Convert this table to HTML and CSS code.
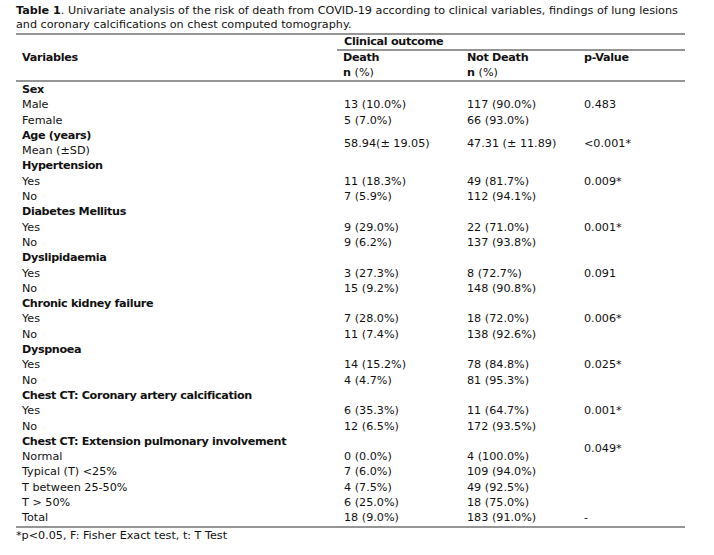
FILE: index.html
```html
<!DOCTYPE html>
<html lang="en">
<head>
<meta charset="utf-8">
<title>Table 1</title>
<link rel="stylesheet" href="styles.css">
</head>
<body>
<div class="wrap">
  <p class="caption"><strong class="tag">Table 1</strong>. Univariate analysis of the risk of death from COVID-19 according to clinical variables, findings of lung lesions and coronary calcifications on chest computed tomography.</p>
  <table class="tbl">
    <colgroup>
      <col class="c1"><col class="c2"><col class="c3"><col class="c4">
    </colgroup>
    <thead>
      <tr class="h1">
        <th rowspan="2" class="var">Variables</th>
        <th colspan="3" class="group">Clinical outcome</th>
      </tr>
      <tr class="h2">
        <th>Death<br><span class="np"><b>n</b> (%)</span></th>
        <th>Not Death<br><span class="np"><b>n</b> (%)</span></th>
        <th class="pv">p-Value</th>
      </tr>
    </thead>
    <tbody>
      <tr><td class="cat">Sex</td><td></td><td></td><td></td></tr>
      <tr><td>Male</td><td>13 (10.0%)</td><td>117 (90.0%)</td><td>0.483</td></tr>
      <tr><td>Female</td><td>5 (7.0%)</td><td>66 (93.0%)</td><td></td></tr>
      <tr><td class="cat">Age (years)</td><td rowspan="2" class="mid">58.94(± 19.05)</td><td rowspan="2" class="mid">47.31 (± 11.89)</td><td rowspan="2" class="mid">&lt;0.001*</td></tr>
      <tr><td>Mean (±SD)</td></tr>
      <tr><td class="cat">Hypertension</td><td></td><td></td><td></td></tr>
      <tr><td>Yes</td><td>11 (18.3%)</td><td>49 (81.7%)</td><td>0.009*</td></tr>
      <tr><td>No</td><td>7 (5.9%)</td><td>112 (94.1%)</td><td></td></tr>
      <tr><td class="cat">Diabetes Mellitus</td><td></td><td></td><td></td></tr>
      <tr><td>Yes</td><td>9 (29.0%)</td><td>22 (71.0%)</td><td>0.001*</td></tr>
      <tr><td>No</td><td>9 (6.2%)</td><td>137 (93.8%)</td><td></td></tr>
      <tr><td class="cat">Dyslipidaemia</td><td></td><td></td><td></td></tr>
      <tr><td>Yes</td><td>3 (27.3%)</td><td>8 (72.7%)</td><td>0.091</td></tr>
      <tr><td>No</td><td>15 (9.2%)</td><td>148 (90.8%)</td><td></td></tr>
      <tr><td class="cat">Chronic kidney failure</td><td></td><td></td><td></td></tr>
      <tr><td>Yes</td><td>7 (28.0%)</td><td>18 (72.0%)</td><td>0.006*</td></tr>
      <tr><td>No</td><td>11 (7.4%)</td><td>138 (92.6%)</td><td></td></tr>
      <tr><td class="cat">Dyspnoea</td><td></td><td></td><td></td></tr>
      <tr><td>Yes</td><td>14 (15.2%)</td><td>78 (84.8%)</td><td>0.025*</td></tr>
      <tr><td>No</td><td>4 (4.7%)</td><td>81 (95.3%)</td><td></td></tr>
      <tr><td class="cat">Chest CT: Coronary artery calcification</td><td></td><td></td><td></td></tr>
      <tr><td>Yes</td><td>6 (35.3%)</td><td>11 (64.7%)</td><td>0.001*</td></tr>
      <tr><td>No</td><td>12 (6.5%)</td><td>172 (93.5%)</td><td></td></tr>
      <tr><td class="cat">Chest CT: Extension pulmonary involvement</td><td></td><td></td><td rowspan="2" class="mid">0.049*</td></tr>
      <tr><td>Normal</td><td>0 (0.0%)</td><td>4 (100.0%)</td></tr>
      <tr><td>Typical (T) &lt;25%</td><td>7 (6.0%)</td><td>109 (94.0%)</td><td></td></tr>
      <tr><td>T between 25-50%</td><td>4 (7.5%)</td><td>49 (92.5%)</td><td></td></tr>
      <tr><td>T &gt; 50%</td><td>6 (25.0%)</td><td>18 (75.0%)</td><td></td></tr>
      <tr class="last"><td>Total</td><td>18 (9.0%)</td><td>183 (91.0%)</td><td>-</td></tr>
    </tbody>
  </table>
  <p class="foot">*p&lt;0.05, F: Fisher Exact test, t: T Test</p>
</div>
</body>
</html>
```
FILE: styles.css
```css
html, body {
  margin: 0;
  padding: 0;
  background: #ffffff;
}
body {
  font-family: "DejaVu Sans", "Liberation Sans", sans-serif;
  font-size: 11.2px;
  color: #111111;
}
.wrap {
  padding: 4px 0 0 16px;
  width: 675px;
}
.caption {
  margin: 0;
  line-height: 14px;
  padding-bottom: 1px;
  width: 675px;
}
.caption .tag {
  font-weight: 700;
}
.tbl {
  width: 669px;
  border-collapse: collapse;
  table-layout: fixed;
  border-top: 2px solid #959595;
}
.c1 { width: 321px; }
.c2 { width: 123px; }
.c3 { width: 117px; }
.c4 { width: 108px; }
.tbl th, .tbl td {
  padding: 0 0 0 6px;
  text-align: left;
  vertical-align: top;
  line-height: 15.3px;
  height: 15.3px;
  white-space: nowrap;
}
.tbl td:not(:first-child), .tbl th:not(:first-child) {
  padding-left: 7px;
}
.tbl th {
  font-weight: 700;
  letter-spacing: -0.3px;
}
.tbl .h1 th.group {
  border-bottom: 2px solid #959595;
  height: 14px;
  line-height: 14px;
}
.tbl .h2 th {
  line-height: 14.5px;
  height: 29px;
}
.tbl .var {
  vertical-align: middle;
}
.np {
  font-weight: 400;
  letter-spacing: 0;
}
.tbl thead {
  border-bottom: 2px solid #959595;
}
.tbl .cat {
  font-weight: 700;
  letter-spacing: -0.35px;
}
.tbl .mid {
  vertical-align: middle;
}
.tbl .last td {
  border-bottom: 2px solid #959595;
}
.foot {
  margin: 0;
  line-height: 14px;
  padding-top: 1px;
}
```
